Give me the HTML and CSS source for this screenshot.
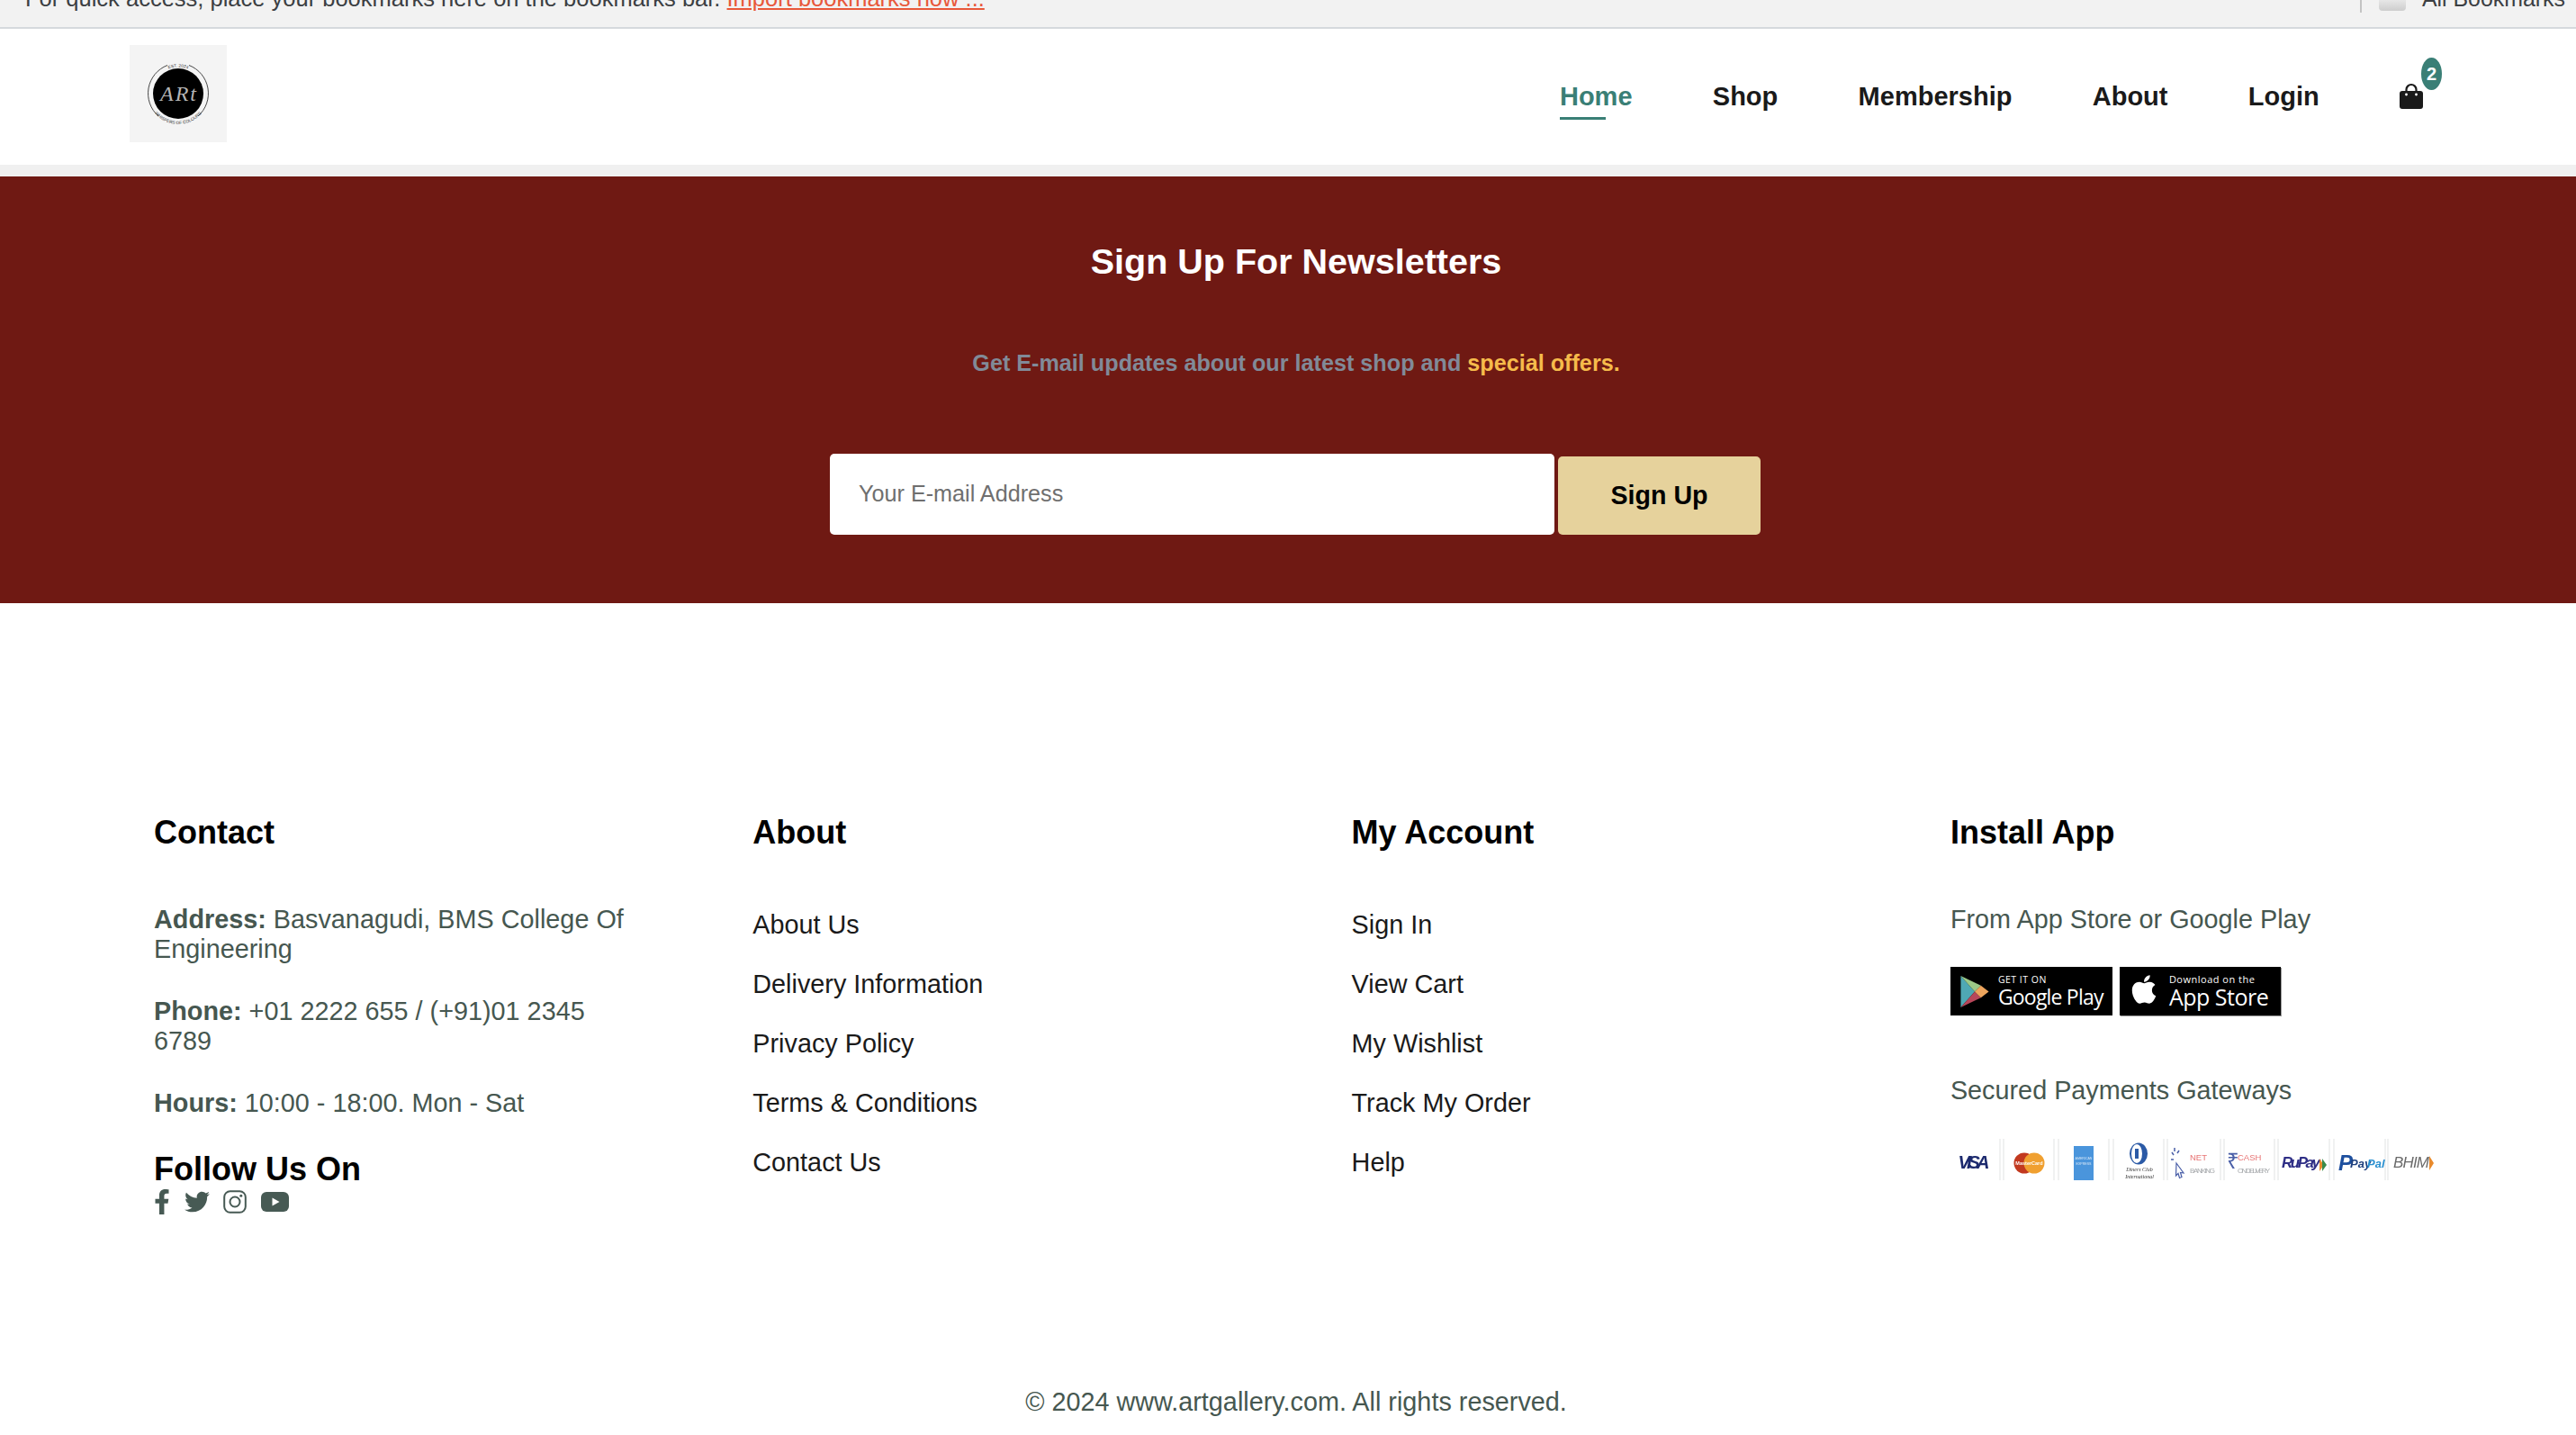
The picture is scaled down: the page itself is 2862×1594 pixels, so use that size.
FILE: index.html
```html
<!DOCTYPE html>
<html lang="en">
<head>
<meta charset="utf-8">
<title>Art Gallery</title>
<link rel="stylesheet" href="styles.css">
</head>
<body>
<div class="bookmarks">
  <p class="bm-text">For quick access, place your bookmarks here on the bookmarks bar. <a href="#" class="bm-link">Import bookmarks now ...</a></p>
  <div class="bm-all">
    <span class="bm-divider"></span>
    <span class="bm-folder"></span>
    <span>All Bookmarks</span>
  </div>
</div>
<header class="site-header">
  <a href="#" class="logo-box">
    <svg class="logo" viewBox="0 0 72 72">
      <defs>
        <path id="arc-top" d="M6.500 36a29.500 29.500 0 0 1 59 0"/>
        <path id="arc-bottom" d="M2 36a34 34 0 0 0 68 0"/>
      </defs>
      <path d="M24 4.500A33.500 33.500 0 0 0 14 61M48 4.500A33.500 33.500 0 0 1 58 61" fill="none" stroke="#333" stroke-width=".9"/>
      <circle cx="36" cy="36" r="28" fill="#000"/>
      <text class="logo-small"><textPath href="#arc-top" startOffset="50%" text-anchor="middle">EST. 2024</textPath></text>
      <text x="36" y="44" class="logo-art" text-anchor="middle" textLength="40">ARt</text>
      <text class="logo-small"><textPath href="#arc-bottom" startOffset="50%" text-anchor="middle">WHISPERS OF COLOURS</textPath></text>
    </svg>
  </a>
  <nav class="nav">
    <a href="#" class="nav-link nav-active">Home</a>
    <a href="#" class="nav-link">Shop</a>
    <a href="#" class="nav-link">Membership</a>
    <a href="#" class="nav-link">About</a>
    <a href="#" class="nav-link">Login</a>
    <a href="#" class="cart">
      <svg class="bag" viewBox="0 0 26 29"><path d="M7.500 10V7.500a5.500 5.500 0 0 1 11 0V10" fill="none" stroke="#1a1a1a" stroke-width="2.200"/><path d="M3 9h20a3 3 0 0 1 3 3v14a3 3 0 0 1-3 3H3a3 3 0 0 1-3-3V12a3 3 0 0 1 3-3z" fill="#1a1a1a"/><circle cx="7.500" cy="13" r="1.400" fill="#fff"/><circle cx="18.500" cy="13" r="1.400" fill="#fff"/></svg>
      <span class="badge">2</span>
    </a>
  </nav>
</header>
<div class="strip"></div>
<section class="newsletter">
  <h2 class="nl-title">Sign Up For Newsletters</h2>
  <p class="nl-sub">Get E-mail updates about our latest shop and <span class="nl-hi">special offers.</span></p>
  <form class="nl-form">
    <input class="nl-input" type="text" placeholder="Your E-mail Address">
    <button class="nl-btn" type="button">Sign Up</button>
  </form>
</section>
<footer class="footer">
  <div class="footer-grid">
    <div class="col">
      <h3 class="col-title">Contact</h3>
      <p class="info"><strong>Address:</strong> Basvanagudi, BMS College Of Engineering</p>
      <p class="info"><strong>Phone:</strong> +01 2222 655 / (+91)01 2345 6789</p>
      <p class="info"><strong>Hours:</strong> 10:00 - 18:00. Mon - Sat</p>
      <h3 class="follow">Follow Us On</h3>
      <div class="socials">
        <svg class="ic-f" viewBox="0 0 320 512"><path d="M279.140 288l14.220-92.660h-88.910v-60.130c0-25.350 12.420-50.060 52.240-50.060h40.420V6.260S260.430 0 225.360 0c-73.220 0-121.080 44.380-121.080 124.720v70.620H22.890V288h81.390v224h100.170V288z"/></svg>
        <svg class="ic-t" viewBox="0 0 512 512"><path d="M459.370 151.716c.325 4.548.325 9.097.325 13.645 0 138.720-105.583 298.558-298.558 298.558-59.452 0-114.680-17.219-161.137-47.106 8.447.974 16.568 1.299 25.340 1.299 49.055 0 94.213-16.568 130.274-44.832-46.132-.975-84.792-31.188-98.112-72.772 6.498.974 12.995 1.624 19.818 1.624 9.421 0 18.843-1.300 27.614-3.573-48.081-9.747-84.143-51.980-84.143-102.985v-1.299c13.969 7.797 30.214 12.670 47.431 13.319-28.264-18.843-46.781-51.005-46.781-87.391 0-19.492 5.197-37.360 14.294-52.954 51.655 63.675 129.300 105.258 216.365 109.807-1.624-7.797-2.599-15.918-2.599-24.040 0-57.828 46.782-104.934 104.934-104.934 30.213 0 57.502 12.670 76.670 33.137 23.715-4.548 46.456-13.320 66.599-25.340-7.798 24.366-24.366 44.833-46.132 57.827 21.117-2.273 41.584-8.122 60.426-16.243-14.292 20.791-32.161 39.308-52.628 54.253z"/></svg>
        <svg class="ic-i" viewBox="0 0 26 26"><rect x="1.200" y="1.200" width="23.600" height="23.600" rx="6.500" fill="none" stroke="#475a54" stroke-width="2"/><circle cx="13" cy="13" r="5.500" fill="none" stroke="#475a54" stroke-width="2"/><circle cx="19.800" cy="6.200" r="1.500" fill="#475a54"/></svg>
        <svg class="ic-y" viewBox="0 0 31 22"><rect width="31" height="22" rx="6" fill="#475a54"/><path d="M12.500 6.500l8 4.500-8 4.500z" fill="#fff"/></svg>
      </div>
    </div>
    <div class="col">
      <h3 class="col-title">About</h3>
      <ul class="links">
        <li><a href="#">About Us</a></li>
        <li><a href="#">Delivery Information</a></li>
        <li><a href="#">Privacy Policy</a></li>
        <li><a href="#">Terms &amp; Conditions</a></li>
        <li><a href="#">Contact Us</a></li>
      </ul>
    </div>
    <div class="col">
      <h3 class="col-title">My Account</h3>
      <ul class="links">
        <li><a href="#">Sign In</a></li>
        <li><a href="#">View Cart</a></li>
        <li><a href="#">My Wishlist</a></li>
        <li><a href="#">Track My Order</a></li>
        <li><a href="#">Help</a></li>
      </ul>
    </div>
    <div class="col">
      <h3 class="col-title">Install App</h3>
      <p class="app-note">From App Store or Google Play</p>
      <div class="stores">
        <a href="#" class="store store-g">
          <svg class="play" viewBox="0 0 32 36"><path d="M0 0v36l16-18z" fill="#4fa8b4"/><path d="M0 0l16 18 7-7z" fill="#9cc987"/><path d="M0 36l16-18 7 7z" fill="#b8465a"/><path d="M23 11l-7 7 7 7 9-7z" fill="#eea55d"/></svg>
          <span class="store-text">
            <span class="g-top">GET IT ON</span>
            <span class="g-main">Google Play</span>
          </span>
        </a>
        <a href="#" class="store store-a">
          <svg class="apple" viewBox="0 0 384 512"><path fill="#fff" d="M318.700 268.700c-.2-36.700 16.400-64.400 50-84.800-18.800-26.900-47.200-41.700-84.700-44.600-35.500-2.800-74.300 20.700-88.500 20.700-15 0-49.400-19.700-76.400-19.700C63.300 141.200 4 184.800 4 273.500q0 39.300 14.400 81.200c12.800 36.700 59 126.700 107.200 125.200 25.200-.6 43-17.900 75.800-17.900 31.800 0 48.300 17.900 76.400 17.900 48.600-.7 90.400-82.500 102.600-119.300-65.200-30.700-61.700-90-61.700-91.900zm-56.600-164.200c27.300-32.400 24.800-61.900 24-72.500-24.100 1.400-52 16.400-67.900 34.900-17.500 19.800-27.800 44.300-25.600 71.900 26.100 2 49.900-11.400 69.500-34.300z"/></svg>
          <span class="store-text">
            <span class="a-top">Download on the</span>
            <span class="a-main">App Store</span>
          </span>
        </a>
      </div>
      <p class="pay-note">Secured Payments Gateways</p>
      <svg class="pay" viewBox="0 0 544 46">
        <path class="dividers" d="M55 0v46M59 0v46M115 0v46M120 0v46M176 0v46M181 0v46M237 0v46M241 0v46M300 0v46M304 0v46M360 0v46M364 0v46M421 0v46M426 0v46M483 0v46M486 0v46"/>
        <text x="26" y="33" class="p-visa" text-anchor="middle" textLength="35">VISA</text>
        <circle cx="82" cy="27" r="11.500" fill="#c2391f"/>
        <circle cx="93" cy="27" r="11.500" fill="#f0a030"/>
        <text x="87.500" y="29" class="p-mc" text-anchor="middle">MasterCard</text>
        <rect x="137" y="8" width="22" height="38" fill="#4a95dc"/>
        <text x="148" y="23" class="p-amex" text-anchor="middle">AMERICAN</text>
        <text x="148" y="29" class="p-amex" text-anchor="middle">EXPRESS</text>
        <ellipse cx="209" cy="16.500" rx="10" ry="12" fill="#2b5aa6"/>
        <ellipse cx="207" cy="16.500" rx="6" ry="10.500" fill="#fff"/>
        <rect x="205" y="11" width="4" height="11" fill="#2b5aa6"/>
        <text x="210" y="36" class="p-dc" text-anchor="middle">Diners Club</text>
        <text x="210" y="44" class="p-dc" text-anchor="middle">International</text>
        <path d="M251 27l8 11-3.500-.5 1.500 5-2.500 1-1.500-5-2.500 2.500z" fill="none" stroke="#4a5fa8" stroke-width="1.200"/>
        <path d="M249 10v4M254 13l-2 3M246 15l2 3M245 23h3" stroke="#4a5fa8" stroke-width="1.500"/>
        <text x="266" y="24" class="p-red">NET</text>
        <text x="266" y="38" class="p-grey" textLength="28">BANKING</text>
        <text x="307" y="33" class="p-rs">₹</text>
        <text x="319" y="24" class="p-red">CASH</text>
        <text x="319" y="38" class="p-grey" textLength="36">ON DELIVERY</text>
        <text x="368" y="32" class="p-rupay" textLength="43">RuPay</text>
        <path d="M410 22l5 7-5 7z" fill="#e98a2c"/>
        <path d="M413 22l5 7-5 7z" fill="#3a8a4a"/>
        <text x="431" y="35" class="p-pp1">P</text>
        <text x="444" y="32" class="p-pay">Pay</text>
        <text x="463" y="32" class="p-pal">Pal</text>
        <text x="492" y="32" class="p-bhim" textLength="40">BHIM</text>
        <path d="M532 19l5 8-5 8z" fill="#e98a2c"/>
      </svg>
    </div>
  </div>
  <p class="copyright">© 2024 www.artgallery.com. All rights reserved.</p>
</footer>
</body>
</html>
```
FILE: styles.css
```css
* { box-sizing: border-box; }
html, body { margin: 0; padding: 0; }
body {
  position: relative;
  width: 2862px;
  height: 1594px;
  overflow: hidden;
  background: #fff;
  font-family: "Liberation Sans", Arial, sans-serif;
  color: #465750;
}
a { text-decoration: none; color: inherit; }
h2, h3, p, ul { margin: 0; padding: 0; }
ul { list-style: none; }

.bookmarks {
  height: 32px;
  background: #f2f2f2;
  border-bottom: 2px solid #d5d9dd;
  display: flex;
  justify-content: space-between;
  align-items: flex-end;
  padding: 0 12px 18px 28px;
  font-size: 25.500px;
  line-height: 28px;
  color: #3c3f43;
}
.bm-text { white-space: nowrap; }
.bm-link { color: #e8583a; text-decoration: underline; }
.bm-all { display: flex; align-items: flex-end; white-space: nowrap; font-size: 24.900px; }
.bm-divider { width: 2px; height: 28px; margin-right: 19px; margin-bottom: -2px; background: #c4c4c4; }
.bm-folder {
  width: 30px;
  height: 14px;
  margin-right: 18px;
  background: linear-gradient(#ebebeb, #cdcdcd);
  border-radius: 0 0 4px 4px;
}

.site-header {
  height: 151px;
  display: flex;
  justify-content: space-between;
  align-items: flex-start;
  padding: 18px 170px 0 144px;
}
.logo-box {
  width: 108px;
  height: 108px;
  background: #f4f4f4;
  display: flex;
  align-items: center;
  justify-content: center;
}
.logo { width: 72px; height: 72px; overflow: visible; }
.logo-small { font-size: 4.800px; fill: #333; font-family: "Liberation Sans", sans-serif; }
.logo-art { font-size: 24px; fill: #b5b5b5; font-family: "Liberation Serif", serif; font-style: italic; }

.nav { display: flex; align-items: center; gap: 89.300px; height: 114px; }
.nav-link {
  position: relative;
  font-size: 29px;
  font-weight: 700;
  color: #1a1a1a;
  line-height: 34px;
}
.nav-active { color: #3a7f76; }
.nav-active::after {
  content: "";
  position: absolute;
  left: 0;
  bottom: -9px;
  width: 51px;
  height: 3px;
  background: #3a7f76;
}
.cart { position: relative; display: block; width: 26px; height: 29px; margin-top: -1px; }
.bag { display: block; width: 26px; height: 29px; }
.badge {
  position: absolute;
  left: 24px;
  top: -28px;
  width: 23px;
  height: 36px;
  border-radius: 50%;
  background: #3a7f76;
  color: #fff;
  font-size: 20px;
  font-weight: 700;
  display: flex;
  align-items: center;
  justify-content: center;
}

.strip { height: 13px; background: #f0f0f0; }

.newsletter {
  height: 474px;
  background: #6f1913;
  display: flex;
  flex-direction: column;
  align-items: center;
  padding: 70px 0 0 18px;
}
.nl-title { font-size: 39.500px; line-height: 48px; color: #fff; font-weight: 700; }
.nl-sub {
  margin-top: 74px;
  font-size: 25.200px;
  line-height: 30px;
  font-weight: 700;
  color: #818a98;
}
.nl-hi { color: #f6bb4b; }
.nl-form { display: flex; align-items: flex-end; gap: 4px; margin: 86px 2px 0 0; }
.nl-input {
  width: 805px;
  height: 90px;
  border: 0;
  border-radius: 5px;
  padding: 0 32px 2px;
  background: #fff;
  font: 25.200px "Liberation Sans", Arial, sans-serif;
  outline: none;
}
.nl-input::placeholder { color: #6f6f6f; opacity: 1; }
.nl-btn {
  width: 225px;
  height: 87px;
  border: 0;
  border-radius: 5px;
  background: #e6d29c;
  color: #000;
  font: 700 28.600px "Liberation Sans", Arial, sans-serif;
}

.footer { padding-left: 171px; }
.footer-grid {
  display: grid;
  grid-template-columns: repeat(4, 665.300px);
  padding-top: 234px;
}
.col-title { font-size: 36px; line-height: 42px; font-weight: 700; color: #000; }
.info { font-size: 28.800px; line-height: 33px; max-width: 540px; margin-bottom: 36px; }
.col-title + .info { margin-top: 59px; }
.info strong { font-weight: 700; }
.follow { font-size: 36px; font-weight: 700; color: #000; padding-top: 1px; line-height: 39px; }
.socials { display: flex; align-items: center; gap: 15.500px; height: 28px; margin-top: 3px; fill: #475a54; }
.ic-f { width: 18px; height: 28px; }
.ic-t { width: 28px; height: 28px; }
.ic-i { width: 26px; height: 26px; }
.ic-y { width: 31px; height: 22px; }
.links { margin-top: 65px; display: flex; flex-direction: column; gap: 33px; font-size: 28.800px; line-height: 33px; color: #1a1a1a; }
.app-note { margin-top: 59px; font-size: 28.800px; line-height: 33px; }
.stores { display: flex; gap: 8px; margin-top: 36px; }
.store { width: 180px; height: 54px; background: #000; color: #fff; display: flex; align-items: center; font-family: "Open Sans", sans-serif; }
.store-g { padding-left: 11px; gap: 10px; }
.store-a { width: 179px; padding-left: 12px; gap: 13px; box-shadow: 1px 1px 0 #999; }
.play { width: 32px; height: 35px; }
.apple { width: 30px; height: 36px; margin-top: -4px; }
.store-text { display: flex; flex-direction: column; white-space: nowrap; }
.g-top { font-size: 10.500px; line-height: 12px; letter-spacing: .5px; }
.g-main { font-size: 23px; line-height: 26px; letter-spacing: -.8px; }
.a-top { font-size: 11px; line-height: 13px; letter-spacing: .5px; }
.a-main { font-size: 25px; line-height: 27px; letter-spacing: -.5px; }
.pay-note { margin-top: 67px; font-size: 28.800px; line-height: 33px; }
.pay { display: block; width: 544px; height: 46px; margin-top: 37px; filter: blur(.4px); font-family: "Liberation Sans", sans-serif; }
.dividers { stroke: #eceded; stroke-width: 1.500; }
.p-visa { font-size: 20px; font-weight: 700; font-style: italic; fill: #1c2a6e; }
.p-mc { font-size: 5.500px; font-weight: 700; fill: #fff; }
.p-amex { font-size: 3.600px; fill: #d7e7f7; }
.p-dc { font-size: 6px; font-family: "Liberation Serif", serif; fill: #333; font-style: italic; }
.p-red { font-size: 9.500px; fill: #e87474; }
.p-grey { font-size: 8px; fill: #a5a8ab; }
.p-rs { font-size: 24px; fill: #4a5fa8; }
.p-rupay { font-size: 17px; font-weight: 700; font-style: italic; fill: #2f2f86; }
.p-pp1 { font-size: 24px; font-weight: 700; font-style: italic; fill: #1d4f9e; }
.p-pay { font-size: 13px; font-weight: 700; font-style: italic; fill: #1d3f7e; }
.p-pal { font-size: 13px; font-weight: 700; font-style: italic; fill: #2a90d0; }
.p-bhim { font-size: 17px; font-style: italic; fill: #6a6a6a; }
.copyright { position: absolute; left: 0; top: 1541px; width: 2880px; text-align: center; font-size: 28.800px; line-height: 33px; }
```
